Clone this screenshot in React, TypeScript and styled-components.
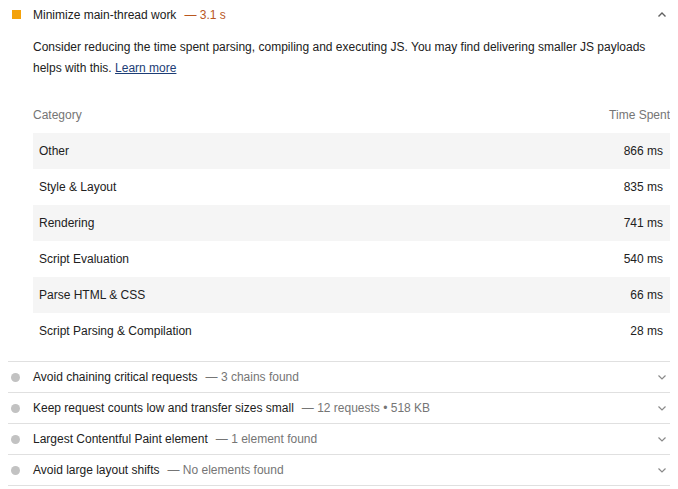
import React from "react";
import styled, { createGlobalStyle } from "styled-components";

const Global = createGlobalStyle`
  body {
    margin: 8px;
    margin-top: 0;
    background: #ffffff;
    font-family: "Liberation Sans", Arial, sans-serif;
    font-size: 12px;
    color: #212121;
  }
`;

const Wrap = styled.div`
  display: flex;
  flex-direction: column;
  width: 662px;
`;

const Audit = styled.div<{ $border?: boolean }>`
  border-bottom: ${(p) => (p.$border ? "1px solid #e0e0e0" : "none")};
`;

const Header = styled.div<{ $h: number }>`
  display: flex;
  align-items: center;
  height: ${(p) => p.$h}px;
`;

const IconCell = styled.div`
  width: 25px;
  display: flex;
  align-items: center;
  justify-content: flex-start;
  padding-left: 3px;
  box-sizing: border-box;
  flex: none;
`;

const Square = styled.span`
  display: block;
  width: 9px;
  height: 9px;
  margin-left: 1px;
  background: #f4a20b;
`;

const Dot = styled.span`
  display: block;
  width: 9px;
  height: 9px;
  border-radius: 50%;
  background: #c2c2c2;
`;

const Title = styled.span`
  color: #212121;
  flex: 1;
  white-space: nowrap;
`;

const Extra = styled.span<{ $warn?: boolean }>`
  margin-left: 8px;
  color: ${(p) => (p.$warn ? "#b9571f" : "#757575")};
`;

const Chevron = styled.svg`
  width: 10px;
  height: 10px;
  margin-right: 3px;
  flex: none;
`;

const Body = styled.div`
  padding-left: 25px;
  padding-bottom: 12px;
`;

const Desc = styled.p`
  margin: 8px 0 0;
  line-height: 21px;
  color: #212121;
`;

const Link = styled.a`
  color: #1c3d76;
  text-decoration: underline;
`;

const Table = styled.div`
  margin-top: 18px;
  display: flex;
  flex-direction: column;
`;

const Row = styled.div<{ $shade?: boolean; $head?: boolean }>`
  display: flex;
  justify-content: space-between;
  align-items: center;
  height: 36px;
  padding: 0 7px 0 6px;
  background: ${(p) => (p.$shade ? "#f5f5f5" : "transparent")};
  color: ${(p) => (p.$head ? "#757575" : "#212121")};
`;

const HeadRow = styled(Row)`
  padding: 0;
`;

const Up = () => (
  <Chevron viewBox="0 0 10 10">
    <path d="M1.5 6.5 L5 3 L8.5 6.5" fill="none" stroke="#616161" strokeWidth="1.4" />
  </Chevron>
);

const Down = () => (
  <Chevron viewBox="0 0 10 10">
    <path d="M1.5 3.5 L5 7 L8.5 3.5" fill="none" stroke="#8a8a8a" strokeWidth="1.2" />
  </Chevron>
);

const rows: [string, string][] = [
  ["Other", "866 ms"],
  ["Style & Layout", "835 ms"],
  ["Rendering", "741 ms"],
  ["Script Evaluation", "540 ms"],
  ["Parse HTML & CSS", "66 ms"],
  ["Script Parsing & Compilation", "28 ms"],
];

const collapsed: [string, string][] = [
  ["Avoid chaining critical requests", "3 chains found"],
  ["Keep request counts low and transfer sizes small", "12 requests • 518 KB"],
  ["Largest Contentful Paint element", "1 element found"],
  ["Avoid large layout shifts", "No elements found"],
];

export default function App() {
  return (
    <>
      <Global />
      <Wrap>
        <Audit $border>
          <Header $h={29}>
            <IconCell>
              <Square />
            </IconCell>
            <Title>
              Minimize main-thread work
              <Extra $warn>— 3.1 s</Extra>
            </Title>
            <Up />
          </Header>
          <Body>
            <Desc>
              Consider reducing the time spent parsing, compiling and executing JS. You may find delivering smaller JS payloads
              helps with this. <Link href="#">Learn more</Link>
            </Desc>
            <Table>
              <HeadRow $head>
                <span>Category</span>
                <span>Time Spent</span>
              </HeadRow>
              {rows.map(([c, t], i) => (
                <Row key={c} $shade={i % 2 === 0}>
                  <span>{c}</span>
                  <span>{t}</span>
                </Row>
              ))}
            </Table>
          </Body>
        </Audit>
        {collapsed.map(([t, e]) => (
          <Audit $border key={t}>
            <Header $h={30}>
              <IconCell>
                <Dot />
              </IconCell>
              <Title>
                {t}
                <Extra>— {e}</Extra>
              </Title>
              <Down />
            </Header>
          </Audit>
        ))}
      </Wrap>
    </>
  );
}
